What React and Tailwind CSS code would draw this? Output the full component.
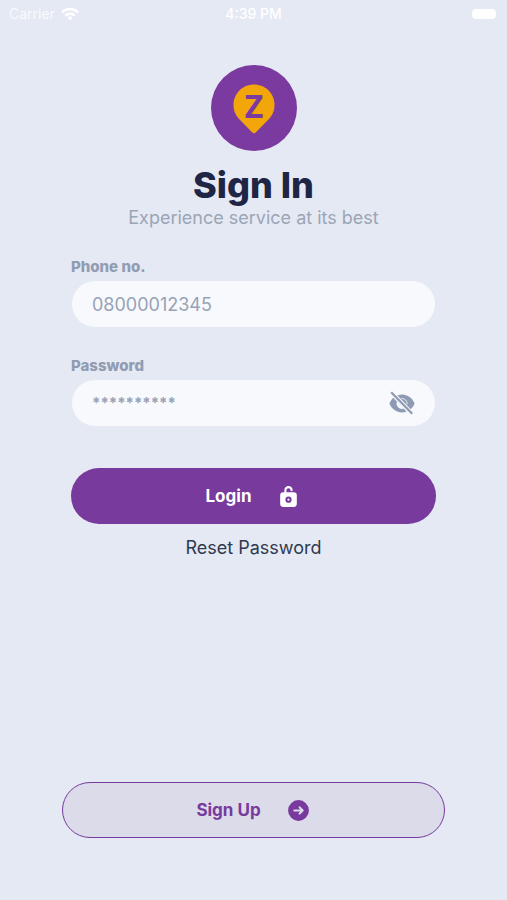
import React, { useState } from "react";

function Logo() {
  return (
    <svg viewBox="0 0 86 86" className="size-[86px]" role="img" aria-label="Logo">
      <circle cx="43" cy="43" r="43" fill="#7b3aa0" />
      <path
        d="M43 19.5c-11.6 0-20.5 9-20.5 20.5 0 6.4 2.6 11 6.8 15.3l12 12.2c1 1 2.4 1 3.4 0l12-12.2c4.2-4.3 6.8-8.9 6.8-15.3 0-11.5-8.9-20.5-20.5-20.5z"
        fill="#f2a60a"
      />
      <text
        x="43"
        y="53"
        textAnchor="middle"
        fill="#7b3aa0"
        className="font-['Open_Sans',sans-serif] text-[32px] font-bold"
      >
        Z
      </text>
    </svg>
  );
}

function WifiIcon() {
  return (
    <svg viewBox="0 0 18 14" className="h-[14px] w-[18px]" fill="none" stroke="currentColor" strokeWidth="2.6">
      <path d="M1 5.2a11.5 11.5 0 0 1 16 0" />
      <path d="M4.2 8.6a7 7 0 0 1 9.6 0" />
      <path d="M9 13.5l-2.6-2.7a3.8 3.8 0 0 1 5.2 0z" fill="currentColor" stroke="none" />
    </svg>
  );
}

function EyeOffIcon() {
  return (
    <svg viewBox="0 0 26 24" className="h-6 w-[26px]" fill="none">
      <path
        d="M0.5 12.5C2.5 7 7.5 3.5 13 3.5s10.500 3.5 12.5 9C23.5 18 18.5 21.5 13 21.5S2.5 18 .5 12.5z"
        fill="#8f9bb3"
      />
      <path d="M8 10.500a5.400 5.400 0 0 0 7 7z" fill="#f7f9fd" />
      <path d="M12.500 7.500a5.200 5.200 0 0 1 5.600 5.800" stroke="#f7f9fd" strokeWidth="0.800" />
      <path d="M1 0l23.5 24.5" stroke="#f7f9fd" strokeWidth="4.600" />
      <path d="M2.2 1.2l21 21.6" stroke="#8f9bb3" strokeWidth="2.300" />
    </svg>
  );
}

function UnlockIcon() {
  return (
    <svg viewBox="0 0 24 24" className="size-[25px]" fill="currentColor">
      <circle cx="12" cy="15" r="1" />
      <path d="M17 8h-7V6a2 2 0 0 1 4 0 1 1 0 0 0 2 0 4 4 0 0 0-8 0v2H7a3 3 0 0 0-3 3v8a3 3 0 0 0 3 3h10a3 3 0 0 0 3-3v-8a3 3 0 0 0-3-3zm-5 10a3 3 0 1 1 3-3 3 3 0 0 1-3 3z" />
    </svg>
  );
}

function ArrowCircleIcon() {
  return (
    <svg viewBox="0 0 24 24" className="size-[25px]" fill="currentColor">
      <path d="M2 12A10 10 0 1 0 12 2 10 10 0 0 0 2 12zm11.86-3.69l2.86 3a.49.49 0 0 1 .1.15.54.54 0 0 1 .1.16.94.94 0 0 1 0 .76 1 1 0 0 1-.21.33l-3 3a1 1 0 0 1-1.42-1.42l1.3-1.29H8a1 1 0 0 1 0-2h5.66l-1.25-1.31a1 1 0 0 1 1.45-1.38z" />
    </svg>
  );
}

function StatusBar() {
  return (
    <div className="grid h-7 grid-cols-3 items-center px-[9px] text-sm text-white">
      <div className="flex items-center gap-1.5">
        <span className="opacity-80">Carrier</span>
        <WifiIcon />
      </div>
      <span className="text-center font-medium">4:39 PM</span>
      <div className="mr-0.5 h-2.5 w-6 justify-self-end rounded-[4px] bg-white" />
    </div>
  );
}

export default function App() {
  const [phone, setPhone] = useState("");
  const [password, setPassword] = useState("");
  const [visible, setVisible] = useState(false);

  return (
    <div className="flex min-h-screen flex-col bg-[#e4e9f3] font-['Inter',sans-serif]">
      <StatusBar />

      <header className="flex flex-col items-center pt-[37px] text-center">
        <Logo />
        <h1 className="mt-[15px] text-4xl leading-[38px] font-extrabold text-[#1e2545]">Sign In</h1>
        <p className="text-lg text-[#9ba5b5]">Experience service at its best</p>
      </header>

      <form className="flex flex-col px-[71px] pt-[23px]" onSubmit={(e) => e.preventDefault()}>
        {/* Phone */}
        <label htmlFor="phone" className="text-[15px] leading-6 font-extrabold text-[#919cb2]">
          Phone no.
        </label>
        <input
          id="phone"
          type="tel"
          placeholder="08000012345"
          value={phone}
          onChange={(e) => setPhone(e.target.value)}
          className="mx-px mt-0.5 h-[46px] rounded-full bg-[#f7f9fd] px-5 text-lg text-[#8f9bb3] outline-none placeholder:text-[#98a2b5]"
        />

        {/* Password */}
        <label htmlFor="password" className="mt-[27px] text-[15px] leading-6 font-extrabold text-[#919cb2]">
          Password
        </label>
        <div className="mx-px mt-0.5 flex h-[46px] items-center rounded-full bg-[#f7f9fd] px-5">
          <input
            id="password"
            type={visible ? "text" : "password"}
            placeholder="**********"
            value={password}
            onChange={(e) => setPassword(e.target.value)}
            className="min-w-0 flex-1 text-[15px] font-bold text-[#8f9bb3] outline-none placeholder:text-[#98a2b5]"
          />
          <button type="button" aria-label="Toggle password" onClick={() => setVisible(!visible)}>
            <EyeOffIcon />
          </button>
        </div>

        <button
          type="submit"
          className="mt-[42px] flex h-14 w-full items-center justify-center gap-[25px] rounded-full bg-[#783a9d] text-[17px] leading-6 font-bold text-white"
        >
          Login
          <UnlockIcon />
        </button>
        <a href="#reset" className="mt-2.5 self-center text-lg text-[#2f3950]">
          Reset Password
        </a>
      </form>

      <div className="mt-auto px-[62px] pb-[62px]">
        <button
          type="button"
          className="flex h-14 w-full items-center justify-center gap-[25px] rounded-full border border-[#783a9d] bg-[#dcdbea] text-[17px] leading-6 font-bold text-[#783a9d]"
        >
          Sign Up
          <ArrowCircleIcon />
        </button>
      </div>
    </div>
  );
}
